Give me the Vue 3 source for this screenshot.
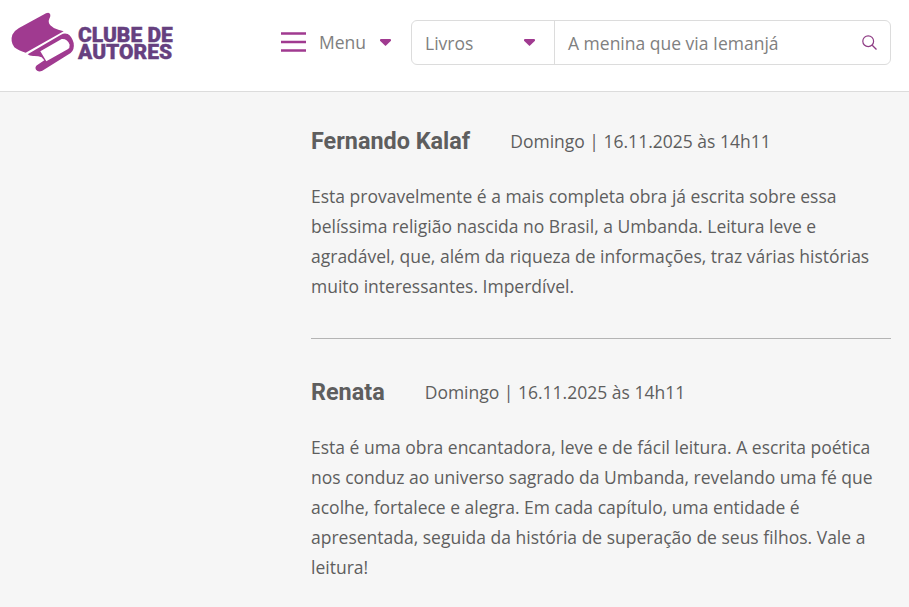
<template>
  <div class="page">
    <header class="topbar">
      <a class="logo" href="#">
        <svg class="logo-mark" width="75" height="70" viewBox="0 0 225 210">
          <path d="M123 16Q133 11 136 20Q137 25 133 32Q128 42 136 52Q145 62 160 65L176 70L62 134Q40 128 28 118Q15 100 22 80Q28 68 42 60Z" fill="#a03a90"/>
          <path fill-rule="evenodd" fill="#a03a90" d="M68 139L168 80Q178 74 188 78Q200 84 206 105Q209 125 197 135L112 188Q100 194 93 185Q88 176 98 170L118 157L110 148Q100 144 88 144Q74 145 68 139ZM106 130L124 160L188 124Q195 120 194 110Q188 92 170 93Z"/>
        </svg>
        <span class="logo-text">CLUBE DE<br>AUTORES</span>
      </a>
      <button class="menu-btn">
        <svg class="burger" width="26" height="20" viewBox="0 0 26 20">
          <path d="M0 1.5h25M0 10h25M0 18.5h25" stroke="#a03a90" stroke-width="2.4" fill="none"/>
        </svg>
        <span>Menu</span>
        <svg class="caret" width="11" height="7" viewBox="0 0 11 7"><path d="M1 0h9q1 0 1 1v.8L5.5 7 0 1.8V1q0-1 1-1z" fill="#a03a90"/></svg>
      </button>
      <div class="search">
        <div class="select">
          <span>Livros</span>
          <svg class="caret" width="11" height="7" viewBox="0 0 11 7"><path d="M1 0h9q1 0 1 1v.8L5.5 7 0 1.8V1q0-1 1-1z" fill="#a03a90"/></svg>
        </div>
        <div class="query">
          <span>A menina que via Iemanjá</span>
          <svg width="17" height="17" viewBox="0 0 17 17">
            <circle cx="7.2" cy="7.2" r="5.4" fill="none" stroke="#8f3d85" stroke-width="1.2"/>
            <path d="M11.2 11.2l4.3 4.3" stroke="#8f3d85" stroke-width="1.3"/>
          </svg>
        </div>
      </div>
    </header>

    <main class="reviews">
      <article v-for="r in reviews" :key="r.name" class="review">
        <div class="review-head">
          <h3>{{ r.name }}</h3>
          <span class="date">{{ r.date }}</span>
        </div>
        <p>{{ r.text }}</p>
      </article>
    </main>
  </div>
</template>

<script setup>
const reviews = [
  {
    name: 'Fernando Kalaf',
    date: 'Domingo | 16.11.2025 às 14h11',
    text: 'Esta provavelmente é a mais completa obra já escrita sobre essa belíssima religião nascida no Brasil, a Umbanda. Leitura leve e agradável, que, além da riqueza de informações, traz várias histórias muito interessantes. Imperdível.'
  },
  {
    name: 'Renata',
    date: 'Domingo | 16.11.2025 às 14h11',
    text: 'Esta é uma obra encantadora, leve e de fácil leitura. A escrita poética nos conduz ao universo sagrado da Umbanda, revelando uma fé que acolhe, fortalece e alegra. Em cada capítulo, uma entidade é apresentada, seguida da história de superação de seus filhos. Vale a leitura!'
  }
]
</script>

<style>
html, body { background: #f6f6f6; }
</style>

<style scoped>
.page {
  height: 607px;
  overflow: hidden;
  font-family: "Open Sans", sans-serif;
  color: #5e5e5e;
}

.topbar {
  box-sizing: border-box;
  height: 92px;
  background: #fff;
  border-bottom: 1px solid #dcdcdc;
  display: flex;
  align-items: flex-start;
  padding: 8px 18px 0 5px;
}

.logo {
  display: flex;
  align-items: center;
  text-decoration: none;
  width: 276px;
  height: 70px;
}

.logo-mark { flex: none; }

.logo-text {
  font-family: "Roboto", sans-serif;
  font-weight: 900;
  font-size: 21px;
  line-height: 17px;
  color: #66407f;
  margin-left: -2px;
  padding-top: 2px;
  -webkit-text-stroke: 0.4px #66407f;
}

.menu-btn {
  display: flex;
  align-items: center;
  height: 40px;
  margin-top: 14px;
  border: 0;
  padding: 0;
  background: none;
  font: inherit;
  font-size: 17.5px;
  color: #808080;
  width: 130px;
}

.burger { margin-right: 12px; }

.menu-btn .caret { margin-left: 14px; }

.search {
  box-sizing: border-box;
  flex: 1;
  display: flex;
  height: 45px;
  margin-top: 12px;
  border: 1px solid #dcdcdc;
  border-radius: 6px;
  font-size: 17.5px;
  color: #808080;
}

.select {
  width: 143px;
  display: flex;
  align-items: center;
  justify-content: space-between;
  padding: 0 19px 0 13px;
  border-right: 1px solid #dcdcdc;
  box-sizing: border-box;
}

.query {
  flex: 1;
  display: flex;
  align-items: center;
  justify-content: space-between;
  padding: 0 12px 0 13px;
}

.reviews {
  margin-left: 311px;
  margin-right: 18px;
}

.review { padding-top: 33px; }
.review + .review {
  border-top: 1px solid #b4b4b4;
  margin-top: 37px;
  padding-top: 37px;
}

.review-head {
  display: flex;
  align-items: center;
  gap: 40px;
  height: 32px;
}

h3 {
  margin: 0;
  font-family: "Roboto", sans-serif;
  font-size: 23.4px;
  font-weight: 700;
}

.date { font-size: 17.5px; }

p {
  margin: 24px 0 0;
  font-size: 17.5px;
  line-height: 30px;
}
</style>
